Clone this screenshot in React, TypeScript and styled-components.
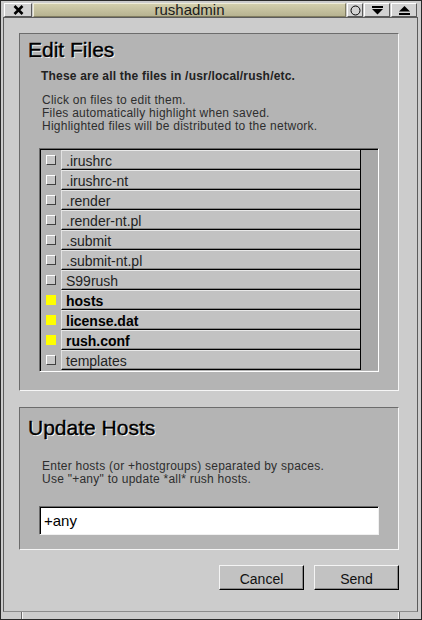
import styled, { createGlobalStyle } from 'styled-components';

const GlobalStyle = createGlobalStyle`
  html, body {
    margin: 0;
    padding: 0;
    background: #cccccc;
  }
  body {
    font-family: 'Liberation Sans', Arial, sans-serif;
  }
  * {
    box-sizing: border-box;
  }
`;

const files = [
  { name: '.irushrc', on: false },
  { name: '.irushrc-nt', on: false },
  { name: '.render', on: false },
  { name: '.render-nt.pl', on: false },
  { name: '.submit', on: false },
  { name: '.submit-nt.pl', on: false },
  { name: 'S99rush', on: false },
  { name: 'hosts', on: true },
  { name: 'license.dat', on: true },
  { name: 'rush.conf', on: true },
  { name: 'templates', on: false },
];

const App = () => {
  return (
    <>
      <GlobalStyle />
      <Window>
        <TitleBar>
          <FrameButton $w={28}>
            <svg width='11' height='10' viewBox='0 0 11 10'>
              <path d='M1.5 1 L9.5 9 M9.5 1 L1.5 9' stroke='#000' strokeWidth='2.6' />
            </svg>
          </FrameButton>
          <Title>rushadmin</Title>
          <FrameButton $w={16}>
            <svg width='11' height='11' viewBox='0 0 11 11'>
              <circle cx='5.5' cy='5.5' r='4.5' fill='none' stroke='#000' strokeWidth='1' />
            </svg>
          </FrameButton>
          <FrameButton $w={26}>
            <svg width='11' height='9' viewBox='0 0 11 9'>
              <rect x='0' y='0' width='11' height='2' fill='#000' />
              <path d='M0 3 H11 L5.5 8.5 Z' fill='#000' />
            </svg>
          </FrameButton>
          <FrameButton $w={26}>
            <svg width='11' height='9' viewBox='0 0 11 9'>
              <path d='M5.5 0 L11 5.5 H0 Z' fill='#000' />
              <rect x='0' y='7' width='11' height='2' fill='#000' />
            </svg>
          </FrameButton>
        </TitleBar>

        <Client>
          <EditPanel>
            <Heading>Edit Files</Heading>
            <Lead>These are all the files in /usr/local/rush/etc.</Lead>
            <Note>
              Click on files to edit them.
              <br />
              Files automatically highlight when saved.
              <br />
              Highlighted files will be distributed to the network.
            </Note>
            <FileList>
              <ListInner>
                <Rows>
                  {files.map((f) => (
                    <FileRow key={f.name}>
                      <CheckCell>
                        <Check $on={f.on} />
                      </CheckCell>
                      <FileButton $on={f.on}>{f.name}</FileButton>
                    </FileRow>
                  ))}
                </Rows>
                <Trough />
              </ListInner>
            </FileList>
          </EditPanel>

          <HostsPanel>
            <Heading>Update Hosts</Heading>
            <HostsNote>
              Enter hosts (or +hostgroups) separated by spaces.
              <br />
              Use "+any" to update *all* rush hosts.
            </HostsNote>
            <HostsInput defaultValue='+any' />
          </HostsPanel>

          <ButtonRow>
            <PushButton>Cancel</PushButton>
            <PushButton>Send</PushButton>
          </ButtonRow>
        </Client>

        <BottomFrame>
          <Corner />
          <BottomMid />
          <Corner />
        </BottomFrame>
      </Window>
    </>
  );
};

export default App;

const Window = styled.div`
  width: 422px;
  height: 620px;
  background: #cccccc;
  border: 1px solid #2a2a2a;
  display: flex;
  flex-direction: column;
`;

const TitleBar = styled.div`
  height: 14px;
  margin: 2px 4px 0 3px;
  display: flex;
  gap: 1px;
`;

const FrameButton = styled.div<{ $w: number }>`
  width: ${(p) => p.$w}px;
  height: 14px;
  background: #d2d2d2;
  border: 1px solid;
  border-color: #ffffff #5a5a5a #5a5a5a #ffffff;
  display: flex;
  align-items: center;
  justify-content: center;
`;

const Title = styled.div`
  flex: 1;
  height: 14px;
  background: linear-gradient(#d2ceac, #b7b391);
  border: 1px solid;
  border-color: #eeecd8 #807c60 #807c60 #eeecd8;
  color: #1a1a1a;
  font-size: 15px;
  line-height: 12px;
  text-align: center;
`;

const Client = styled.div`
  flex: 1;
  margin: 0 3px 0 2px;
  border: 1px solid;
  border-color: #5c5c5c #5c5c5c #8c8c8c #5c5c5c;
  padding: 15px 0 0 15px;
  display: flex;
  flex-direction: column;
`;

const Panel = styled.section`
  width: 380px;
  background: #b4b4b4;
  border: 1px solid;
  border-color: #6c6c6c #f6f6f6 #f6f6f6 #6c6c6c;
  display: flex;
  flex-direction: column;
  align-items: flex-start;
`;

const EditPanel = styled(Panel)`
  padding: 4px 0 18px 8px;
`;

const HostsPanel = styled(Panel)`
  margin-top: 16px;
  padding: 8px 0 14px 8px;
`;

const Heading = styled.h1`
  margin: 0;
  font-size: 21px;
  font-weight: normal;
  line-height: 24px;
  color: #000;
  -webkit-text-stroke: 0.4px #000;
  text-shadow: 1px 1px 0 #ffffff;
`;

const Lead = styled.div`
  margin: 8px 0 0 13px;
  font-size: 12px;
  font-weight: bold;
  line-height: 13px;
  letter-spacing: 0.2px;
  color: #222;
`;

const Note = styled.div`
  margin: 11px 0 0 14px;
  font-size: 12px;
  line-height: 13px;
  letter-spacing: 0.25px;
  color: #2e2e2e;
`;

const HostsNote = styled(Note)`
  margin-top: 20px;
`;

const FileList = styled.div`
  margin: 15px 0 0 11px;
  width: 340px;
  border: 1px solid;
  border-color: #6a6a6a #ffffff #ffffff #6a6a6a;
`;

const ListInner = styled.div`
  display: flex;
  border-top: 1px solid #000;
  border-left: 1px solid #000;
  padding-bottom: 1px;
  background: #b4b4b4;
`;

const Rows = styled.div`
  flex: 1;
  display: flex;
  flex-direction: column;
`;

const FileRow = styled.div`
  height: 20px;
  display: flex;
`;

const CheckCell = styled.div`
  width: 20px;
  display: flex;
  align-items: center;
  justify-content: center;
`;

const Check = styled.div<{ $on: boolean }>`
  width: 10px;
  height: 10px;
  background: ${(p) => (p.$on ? '#ffff00' : '#c8c8c8')};
  border: ${(p) => (p.$on ? 'none' : '1px solid')};
  border-color: #ffffff #404040 #404040 #ffffff;
`;

const FileButton = styled.div<{ $on: boolean }>`
  flex: 1;
  height: 20px;
  background: #c2c2c2;
  border-top: 1px solid #e8e8e8;
  border-left: 1px solid #e2e2e2;
  border-bottom: 1px solid #000;
  box-shadow: inset 0 -1px 0 #888888;
  padding: 1px 0 0 4px;
  font-size: 14px;
  line-height: 18px;
  font-weight: ${(p) => (p.$on ? 'bold' : 'normal')};
  color: ${(p) => (p.$on ? '#000' : '#222')};
  white-space: nowrap;
`;

const Trough = styled.div`
  width: 18px;
  background: #a8a8a8;
  border-left: 1px solid #000;
`;

const HostsInput = styled.input`
  margin: 20px 0 0 11px;
  width: 340px;
  height: 29px;
  background: #ffffff;
  border: 1px solid;
  border-color: #6a6a6a #f0f0f0 #f0f0f0 #6a6a6a;
  box-shadow: inset 1px 1px 0 #000;
  padding: 0 0 0 4px;
  font-family: 'Liberation Sans', Arial, sans-serif;
  font-size: 15px;
  color: #000;
  outline: none;
`;

const ButtonRow = styled.div`
  width: 380px;
  margin-top: 15px;
  display: flex;
  justify-content: flex-end;
  gap: 10px;
`;

const PushButton = styled.button`
  width: 85px;
  height: 25px;
  background: #c2c2c2;
  border: 1px solid;
  border-color: #f4f4f4 #000 #000 #f4f4f4;
  box-shadow: inset -1px -1px 0 #8a8a8a;
  padding: 2px 0 0;
  font-family: 'Liberation Sans', Arial, sans-serif;
  font-size: 14px;
  color: #111;
`;

const BottomFrame = styled.div`
  height: 7px;
  margin: 0 3px 0 2px;
  display: flex;
`;

const Corner = styled.div`
  width: 18px;
`;

const BottomMid = styled.div`
  flex: 1;
  border-left: 1px solid #6a6a6a;
  border-right: 1px solid #6a6a6a;
  box-shadow: inset 1px 0 0 #f4f4f4, inset -1px 0 0 #f4f4f4;
`;
